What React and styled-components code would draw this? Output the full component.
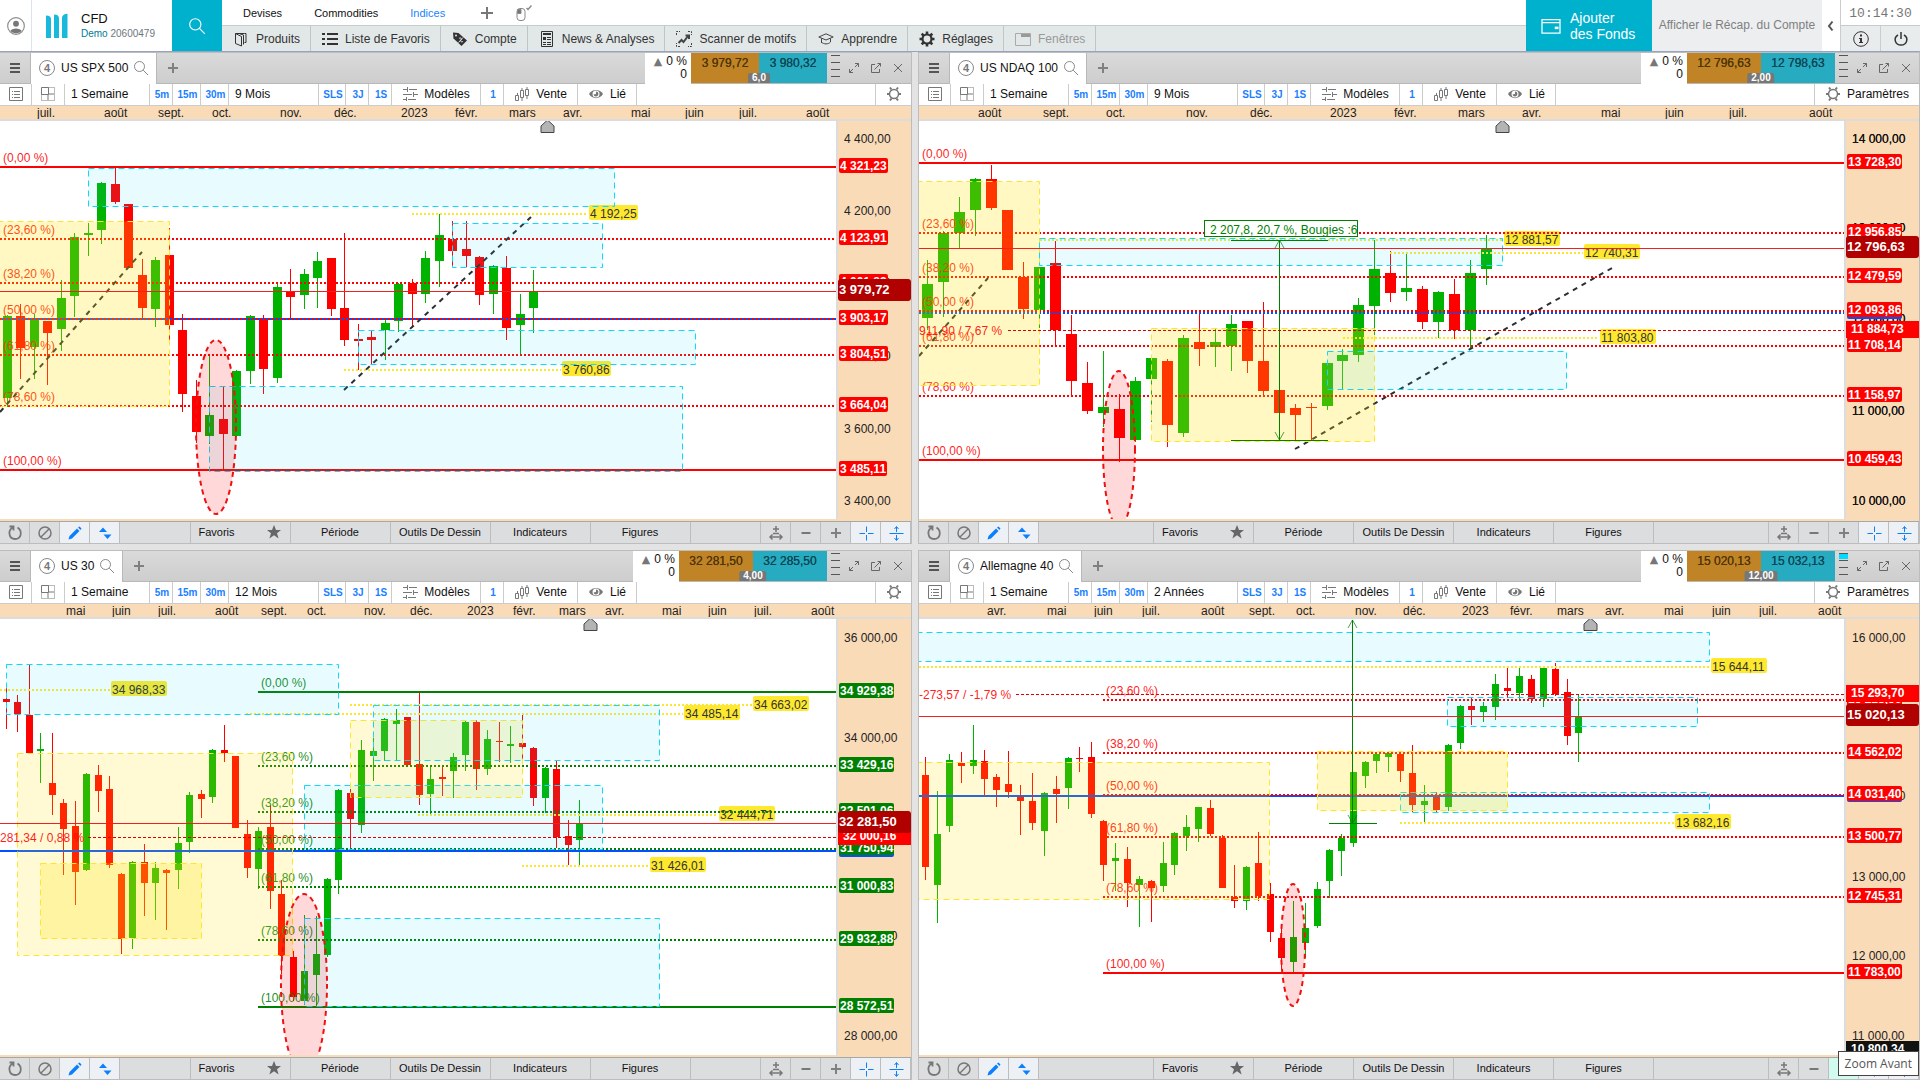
import React from 'react';
import styled, { createGlobalStyle } from 'styled-components';

// candle rows are [colour, high, bodyTop, bodyBottom, low] in plot units

const spx = {
    id: 'spx',
    name: 'US SPX 500',
    range: '9 Mois',
    sell: '3 979,72',
    buy: '3 980,32',
    spread: '6,0',
    size: [836, 398],
    step: 13.5,
    body: 9,
    snap: Math.floor,
    months: [[37, 'juil.'], [104, 'août'], [158, 'sept.'], [212, 'oct.'], [280, 'nov.'], [334, 'déc.'], [401, '2023'], [455, 'févr.'], [509, 'mars'], [563, 'avr.'], [631, 'mai'], [685, 'juin'], [739, 'juil.'], [806, 'août']],
    marker: 547,
    candles: [
        ['g', 194, 195, 277, 286], ['r', 183, 195, 227, 258], ['g', 193, 198, 226, 258], ['r', 200, 200, 212, 264],
        ['g', 159, 177, 208, 230], ['g', 112, 116, 175, 196], ['g', 102, 112, 114, 135], ['g', 61, 62, 109, 123],
        ['r', 47, 63, 81, 83], ['r', 83, 83, 147, 147], ['r', 138, 154, 187, 198], ['g', 136, 139, 188, 206],
        ['r', 107, 134, 204, 221], ['r', 193, 209, 273, 291], ['r', 259, 275, 311, 322], ['g', 235, 294, 315, 323],
        ['r', 266, 298, 313, 348], ['g', 249, 250, 315, 316], ['g', 194, 195, 250, 263], ['r', 194, 198, 248, 273],
        ['g', 163, 166, 257, 262], ['r', 148, 171, 176, 198], ['g', 148, 153, 174, 188], ['g', 131, 140, 157, 187],
        ['r', 137, 137, 188, 195], ['r', 112, 187, 219, 225], ['r', 203, 218, 220, 249], ['r', 210, 216, 219, 243],
        ['g', 198, 202, 209, 239], ['g', 162, 163, 200, 211], ['r', 158, 162, 173, 207], ['g', 130, 137, 173, 182],
        ['g', 93, 114, 140, 166], ['r', 100, 118, 130, 146], ['r', 100, 128, 135, 146], ['r', 135, 136, 174, 184],
        ['g', 144, 145, 173, 193], ['r', 135, 147, 207, 219], ['g', 173, 193, 204, 233], ['g', 149, 171, 187, 212]
    ],
    fib: {
        color: '#ff0000', x: 0,
        levels: [[46, '(0,00 %)', '4 321,23', true], [118, '(23,60 %)', '4 123,91'], [162, '(38,20 %)', '4 001,83'], [198, '(50,00 %)', '3 903,17'], [234, '(61,80 %)', '3 804,51'], [285, '(78,60 %)', '3 664,04'], [349, '(100,00 %)', '3 485,11', true]]
    },
    blue: { y: 198 },
    price: { y: 170, text: '3 979,72' },
    notes: [[93, 412, 586, 589, '4 192,25'], [249, 344, 561, 562, '3 760,86']],
    trends: [[0, 291, 142, 131], [344, 269, 531, 96]],
    zones: [['c', 88, 47, 614, 85], ['y', -3, 100, 169, 285], ['c', 452, 102, 602, 146], ['c', 358, 209, 695, 243], ['c', 209, 265, 682, 350]],
    ellipse: [216, 306, 20, 87],
    ticks: [[18, '4 400,00'], [90, '4 200,00'], [162, '4 000,00'], [235, '3 800,00'], [308, '3 600,00'], [380, '3 400,00']]
};

const ndaq = {
    id: 'ndaq',
    name: 'US NDAQ 100',
    range: '9 Mois',
    sell: '12 796,63',
    buy: '12 798,63',
    spread: '2,00',
    settings: true,
    heavyTicks: true,
    size: [925, 398],
    step: 15.98,
    body: 11,
    snap: Math.round,
    months: [[59, 'août'], [124, 'sept.'], [187, 'oct.'], [267, 'nov.'], [331, 'déc.'], [411, '2023'], [475, 'févr.'], [539, 'mars'], [603, 'avr.'], [682, 'mai'], [746, 'juin'], [810, 'juil.'], [890, 'août']],
    marker: 583,
    candles: [
        ['g', 139, 163, 197, 209], ['g', 110, 112, 161, 196], ['g', 76, 91, 112, 127], ['g', 57, 58, 89, 115],
        ['r', 44, 58, 87, 89], ['r', 89, 89, 149, 149], ['r', 141, 156, 188, 198], ['g', 146, 146, 189, 207],
        ['r', 120, 142, 209, 226], ['r', 194, 213, 260, 275], ['r', 241, 262, 290, 293], ['g', 230, 286, 292, 306],
        ['r', 273, 288, 317, 341], ['g', 256, 260, 319, 321], ['g', 237, 237, 258, 301], ['r', 238, 240, 304, 326],
        ['g', 214, 217, 312, 316], ['r', 192, 221, 228, 245], ['g', 208, 221, 226, 246], ['g', 194, 203, 225, 250],
        ['r', 200, 200, 240, 252], ['r', 181, 240, 270, 274], ['r', 269, 269, 292, 292], ['r', 283, 287, 294, 319],
        ['r', 282, 286, 287, 319], ['g', 242, 242, 285, 289], ['g', 228, 234, 240, 268], ['g', 177, 184, 234, 241],
        ['g', 119, 148, 185, 214], ['r', 130, 152, 172, 181], ['g', 133, 167, 171, 180], ['r', 165, 168, 201, 208],
        ['g', 170, 171, 201, 217], ['r', 158, 173, 209, 218], ['g', 139, 152, 209, 227], ['g', 114, 128, 148, 164]
    ],
    fib: {
        color: '#ff0000', x: 0,
        levels: [[42, '(0,00 %)', '13 728,30', true], [112, '(23,60 %)', '12 956,85'], [156, '(38,20 %)', '12 479,59'], [190, '(50,00 %)', '12 093,86'], [225, '(61,80 %)', '11 708,14'], [275, '(78,60 %)', '11 158,97'], [339, '(100,00 %)', '10 459,43', true]]
    },
    blue: { y: 192, dotted: true },
    price: { y: 127, text: '12 796,63' },
    order: { y: 209, x: 89, text: '911,90 / 7,67 %', tag: '11 884,73' },
    notes: [[119, 121, 583, 585, '12 881,57'], [132, 471, 664, 665, '12 740,31'], [217, 424, 678, 681, '11 803,80']],
    trends: [[0, 235, 69, 157], [376, 328, 693, 147]],
    zones: [['y', -3, 60, 120, 264], ['c', 120, 117, 583, 144], ['y', 232, 207, 455, 320], ['c', 408, 230, 647, 268]],
    ellipse: [200, 328, 16, 78],
    measure: { x: 360, top: 119, bottom: 319, from: 312, to: 409, label: '2 207,8, 20,7 %, Bougies :6' },
    ticks: [[18, '14 000,00'], [107, '13 000,00'], [198, '12 000,00'], [290, '11 000,00'], [380, '10 000,00']]
};

const us30 = {
    id: 'us30',
    name: 'US 30',
    range: '12 Mois',
    sell: '32 281,50',
    buy: '32 285,50',
    spread: '4,00',
    size: [836, 436],
    step: 11.463,
    body: 7,
    snap: Math.round,
    months: [[66, 'mai'], [112, 'juin'], [158, 'juil.'], [215, 'août'], [261, 'sept.'], [307, 'oct.'], [364, 'nov.'], [410, 'déc.'], [467, '2023'], [513, 'févr.'], [559, 'mars'], [605, 'avr.'], [662, 'mai'], [708, 'juin'], [754, 'juil.'], [811, 'août']],
    marker: 590,
    candles: [
        ['r', 69, 80, 83, 110], ['r', 76, 83, 95, 113], ['r', 46, 96, 134, 134], ['g', 114, 130, 132, 164],
        ['r', 114, 164, 176, 196], ['r', 180, 184, 210, 256], ['r', 182, 207, 253, 286], ['g', 154, 155, 251, 252],
        ['r', 146, 156, 172, 193], ['r', 157, 170, 246, 249], ['r', 254, 255, 320, 335], ['g', 242, 243, 319, 330],
        ['r', 225, 243, 264, 297], ['g', 243, 249, 264, 301], ['r', 250, 251, 254, 311], ['g', 208, 224, 251, 270],
        ['g', 173, 176, 223, 234], ['r', 171, 175, 180, 199], ['g', 130, 131, 178, 184], ['r', 106, 131, 134, 143],
        ['r', 137, 137, 209, 209], ['r', 201, 215, 249, 259], ['g', 208, 212, 250, 270], ['r', 186, 208, 272, 290],
        ['r', 261, 275, 337, 355], ['r', 332, 338, 378, 382], ['g', 296, 352, 382, 386], ['g', 297, 335, 356, 387],
        ['g', 259, 260, 336, 338], ['g', 170, 171, 261, 275], ['r', 170, 174, 200, 229], ['g', 121, 131, 206, 214],
        ['g', 119, 132, 137, 162], ['g', 99, 100, 132, 142], ['g', 90, 101, 105, 141], ['r', 98, 98, 146, 146],
        ['r', 74, 145, 176, 186], ['g', 147, 160, 175, 195], ['r', 148, 158, 160, 177], ['g', 134, 138, 152, 179],
        ['g', 102, 103, 136, 152], ['r', 101, 103, 150, 171], ['g', 111, 120, 150, 156], ['r', 103, 122, 123, 143],
        ['g', 107, 125, 127, 144], ['r', 96, 124, 128, 145], ['r', 128, 129, 179, 187], ['g', 148, 149, 179, 194],
        ['r', 142, 150, 218, 229], ['r', 201, 217, 226, 246], ['g', 181, 205, 221, 246]
    ],
    fib: {
        color: '#008000', x: 258,
        levels: [[73, '(0,00 %)', '34 929,38', true], [147, '(23,60 %)', '33 429,16'], [193, '(38,20 %)', '32 501,06'], [230, '(50,00 %)', '31 750,94'], [268, '(61,80 %)', '31 000,83'], [321, '(78,60 %)', '29 932,88'], [388, '(100,00 %)', '28 572,51', true]]
    },
    blue: { y: 232 },
    price: { y: 204, text: '32 281,50' },
    order: { y: 218, x: 88, text: '281,34 / 0,88 %', tag: '32 000,16' },
    notes: [[71, 0, 110, 111, '34 968,33'], [86, 350, 752, 753, '34 663,02'], [95, 246, 683, 684, '34 485,14'], [196, 418, 717, 719, '32 444,71'], [247, 522, 648, 650, '31 426,01']],
    trends: [],
    zones: [['c', 6, 45, 338, 95], ['p', 17, 134, 292, 336], ['y', 40, 244, 201, 319], ['c', 304, 166, 602, 230], ['p', 350, 101, 522, 178], ['c', 373, 86, 659, 141], ['c', 304, 299, 659, 387]],
    ellipse: [304, 365, 23, 90],
    ticks: [[19, '36 000,00'], [119, '34 000,00'], [218, '32 000,00'], [317, '30 000,00'], [417, '28 000,00']]
};

const dax = {
    id: 'dax',
    name: 'Allemagne 40',
    range: '2 Années',
    sell: '15 020,13',
    buy: '15 032,13',
    spread: '12,00',
    settings: true,
    depth: true,
    tooltip: 'Zoom Avant',
    size: [925, 436],
    step: 11.88,
    body: 7,
    snap: Math.round,
    months: [[68, 'avr.'], [128, 'mai'], [175, 'juin'], [223, 'juil.'], [282, 'août'], [330, 'sept.'], [377, 'oct.'], [436, 'nov.'], [484, 'déc.'], [543, '2023'], [591, 'févr.'], [638, 'mars'], [686, 'avr.'], [745, 'mai'], [793, 'juin'], [840, 'juil.'], [899, 'août']],
    marker: 671,
    candles: [
        ['r', 138, 156, 248, 261], ['g', 172, 215, 266, 304], ['g', 135, 141, 207, 213], ['r', 133, 144, 147, 164],
        ['g', 106, 141, 147, 155], ['r', 131, 142, 160, 176], ['r', 155, 158, 171, 188], ['r', 132, 165, 173, 179],
        ['r', 166, 176, 182, 216], ['r', 154, 182, 204, 211], ['g', 173, 174, 212, 237], ['r', 157, 170, 175, 204],
        ['g', 138, 139, 169, 190], ['r', 128, 139, 140, 153], ['r', 123, 138, 195, 199], ['r', 201, 202, 246, 262],
        ['g', 224, 239, 242, 272], ['r', 228, 240, 264, 288], ['g', 257, 260, 266, 308], ['r', 261, 262, 269, 303],
        ['g', 223, 244, 267, 273], ['g', 213, 214, 246, 256], ['g', 196, 208, 217, 232], ['g', 188, 188, 210, 223],
        ['r', 181, 189, 215, 217], ['r', 216, 219, 269, 269], ['r', 246, 278, 282, 289], ['g', 247, 248, 282, 291],
        ['r', 213, 244, 277, 282], ['r', 264, 275, 313, 323], ['r', 305, 319, 339, 350], ['g', 282, 318, 343, 353],
        ['g', 284, 309, 324, 339], ['g', 263, 270, 307, 309], ['g', 230, 231, 262, 279], ['g', 215, 219, 232, 257],
        ['g', 153, 153, 224, 228], ['g', 142, 143, 157, 169], ['g', 134, 135, 142, 154], ['g', 132, 134, 138, 153],
        ['r', 134, 135, 152, 163], ['r', 126, 154, 186, 193], ['g', 166, 182, 186, 203], ['r', 173, 176, 191, 193],
        ['g', 125, 126, 188, 192], ['g', 86, 87, 124, 130], ['r', 79, 87, 91, 106], ['g', 83, 87, 93, 103],
        ['g', 55, 65, 88, 101], ['r', 49, 69, 72, 79], ['g', 49, 57, 74, 80], ['r', 56, 60, 80, 84],
        ['g', 48, 49, 80, 88], ['r', 44, 50, 75, 77], ['r', 60, 73, 117, 126], ['g', 76, 98, 114, 143]
    ],
    fib: {
        color: '#ff0000', x: 184,
        levels: [[81, '(23,60 %)', '15 218,56'], [134, '(38,20 %)', '14 562,02'], [176, '(50,00 %)', '14 031,40'], [218, '(61,80 %)', '13 500,77'], [278, '(78,60 %)', '12 745,31'], [354, '(100,00 %)', '11 783,00', true]]
    },
    blue: { y: 177 },
    price: { y: 97, text: '15 020,13' },
    order: { y: 75, x: 97, text: '-273,57 / -1,79 %', tag: '15 293,70' },
    notes: [[48, 0, 790, 792, '15 644,11'], [204, 481, 755, 756, '13 682,16']],
    trends: [],
    zones: [['c', -3, 13, 790, 42], ['p', -3, 143, 350, 280], ['c', 481, 173, 790, 193], ['y', 398, 132, 588, 191], ['c', 528, 78, 778, 107]],
    ellipse: [374, 326, 12, 61],
    measure: { x: 433, top: 1, bottom: 204, from: 410, to: 458 },
    ticks: [[19, '16 000,00'], [98, '15 000,00'], [177, '14 000,00'], [258, '13 000,00'], [337, '12 000,00'], [417, '11 000,00']],
    low: { y: 430, text: '10 800,34' }
};

const zoneFill = {
    c: ['rgba(0, 215, 255, 0.09)', '#12d9fa'],
    y: ['rgba(255, 225, 0, 0.24)', '#ffe62e'],
    p: ['rgba(255, 225, 0, 0.17)', '#ffe62e']
};

/* ---------- icons ---------- */

const paths = {
    user: <g><circle cx="8" cy="8" r="7.4" fill="none" stroke="#888" /><circle cx="8" cy="6" r="2.6" fill="#777" /><path d="M3 12.5c1-3 9-3 10 0-2.500 2.600-7.500 2.600-10 0z" fill="#777" /></g>,
    search: <g fill="none" stroke="currentColor"><circle cx="6.500" cy="6.500" r="5" /><path d="M10.200 10.200 15 15" /></g>,
    products: <g fill="none" stroke="#333"><path d="M2.500 2.500h9M2.500 2.500v10l6 2.500V5.500z" /><path d="M6 2.500 10.500 4v9.500M11.500 2.500h1.500v9h-1.500" /></g>,
    list: <path d="M0 2h3v2H0zM5 2h11v2H5zM0 7h3v2H0zM5 7h11v2H5zM0 12h3v2H0zM5 12h11v2H5z" fill="#333" />,
    tag: <g><path d="M1 1.500 6.500 2 15 9.500 9.500 15 1.500 7.500z" fill="#333" /><circle cx="4" cy="4.500" r="1" fill="#e2e8e8" /><path d="M7 7.500c2-1.500 3 .5 2 1.500s0 2.500 2 1.500M11 6.500l-4.500 5" stroke="#e2e8e8" fill="none" /></g>,
    news: <g><path d="M2.500.5h11v15h-11z" fill="none" stroke="#333" /><path d="M4 2h8v2H4zM4 6h3v3H4zM8 6h4v1H8zM8 8h4v1H8zM4 11h3v1H4zM8 11h4v1H8zM4 13h3v1H4zM8 13h4v1H8z" fill="#333" /></g>,
    scan: <g fill="none" stroke="#444"><path d="M.5 4V.5H4M12 .5h3.500V4M15.500 12v3.500H12M4 15.500H.5V12" strokeDasharray="2 1" /><path d="m2.500 12 3-3 2 2L12 5" strokeWidth="2" /><path d="M9.500 4.500H13V8" strokeWidth="2" /></g>,
    learn: <g fill="none" stroke="#444"><path d="M.8 6 8 2.800 15.200 6 8 9z" /><path d="M3.500 7.500v3.500c2 2.500 7 2.500 9 0V7.500M3.500 9.500v2.500" /></g>,
    cog: <g fill="none" stroke="#333"><circle cx="8" cy="8" r="4.500" strokeWidth="2.200" /><path d="M8 .5V3M8 13v2.500M.5 8H3M13 8h2.500M2.700 2.700l1.800 1.800M11.500 11.500l1.800 1.800M13.300 2.700l-1.800 1.800M4.500 11.500l-1.800 1.800" strokeWidth="2.600" /></g>,
    windows: <g><path d="M.5 2.500h15v12H.5z" fill="none" stroke="#aaa" /><path d="M6 3h9v3H6z" fill="#999" /></g>,
    wallet: <g><path d="M.8 2.800h14.400v10.800H.8zM.8 5.200h14.400" fill="none" stroke="#fff" /><path d="M11 8.500h3v2h-3z" fill="#fff" /></g>,
    info: <g><circle cx="8" cy="8" r="7.300" fill="none" stroke="#333" /><path d="M7 3.500h2v2H7zM6 7h3v4h1v1H6v-1h1V8H6z" fill="#333" /></g>,
    power: <path d="M5 4C0 7 2 14 8 14s8-7 3-10M8 1v7" fill="none" stroke="#333" strokeWidth="1.500" />,
    chevron: <path d="M9.500 3.500 6 8l3.500 4.500" fill="none" stroke="#555" strokeWidth="2" />,
    mouse: <g fill="none" stroke="#888"><rect x="1" y="3.500" width="8" height="12" rx="3" /><path d="M1.500 4.500h3.500v4h-3.500z" fill="#777" /><path d="M10.500 3 12 4.500l3.500-4" strokeWidth="1.500" /></g>,
    menu: <path d="M3 3h10v2H3zM3 7h10v2H3zM3 11h10v2H3z" fill="#555" />,
    plus: <path d="M3 8h10M8 3v10" stroke="#808080" strokeWidth="2" fill="none" />,
    bigPlus: <path d="M2 8h12M8 2v12" stroke="#777" strokeWidth="2" fill="none" />,
    expand: <g fill="none" stroke="#666"><path d="m3.500 12.500 3.500-3.500M9 7l3.500-3.500M9 3.500h3.500V7M3.500 9v3.500H7" /></g>,
    popout: <path d="M7 4.500H3.500v8h8V9M6.500 9.500l6-6M9.500 3.500h3v3" fill="none" stroke="#666" />,
    close: <path d="m4 4 8 8M12 4l-8 8" fill="none" stroke="#666" />,
    sheet: <g fill="none" stroke="#777"><path d="M1.500 1.500h13v13h-13z" /><path d="M4 5.500h1M6 5.500h6M4 8.500h1M6 8.500h6M4 11.500h1M6 11.500h6" /></g>,
    layout: <g fill="none" stroke="#777"><path d="M1.500 1.500h7v7h-7z" /><path d="M8.500 1.500h6v6h-6M1.500 8.500v6h6v-6M8.500 8.500h6v6h-6z" strokeDasharray="1 1" /></g>,
    sliders: <path d="M1 4.500h4M7 4.500h8M1 9.500h9M12 9.500h4M1 14.500h3M6 14.500h8M5.500 2v5M11.500 7v5M4.500 12v4" fill="none" stroke="#777" transform="translate(0 -1)" />,
    candles: <g fill="none" stroke="#777"><path d="M1.500 9.500h3v5h-3zM6.500 4.500h3v7h-3zM11.500 3.500h3v6h-3zM3.500 7v2M8 2v2M8 12v3M13 1v2M13 10v3" /></g>,
    eye: <g><path d="M1 8c3-5.500 11-5.500 14 0-3 5.500-11 5.500-14 0z" fill="#777" /><circle cx="8" cy="8" r="3.500" fill="#fff" /><path d="M8 5.500a2.500 2.500 0 1 1-2.500 3L8 8z" fill="#777" /></g>,
    gear: <g fill="none" stroke="#777"><circle cx="8" cy="8" r="4.500" strokeWidth="1.500" /><path d="M1 8h2M13 8h2M4 1.500l1.500 2M12 1.500l-1.500 2M4 14.500l1.500-2M12 14.500l-1.500-2" strokeWidth="2" /></g>,
    reload: <path d="M2.500 1.500h4v4M6 2.500C.5 5 1.500 14 8 14s7.800-8 2.500-11.500" fill="none" stroke="#777" strokeWidth="1.800" />,
    ban: <g fill="none" stroke="#777" strokeWidth="1.500"><circle cx="8" cy="8" r="6" /><path d="m4 12 8-8" /></g>,
    pencil: <path d="M1.500 14.500 2.500 11l7.500-7.500 2.500 2.500L5 13.500zM11 2.500l1.500-1L14.500 3.500l-1 1.500z" fill="#0a80ff" />,
    updown: <path d="M6 2.500 10 7H2zM10.500 14 6.500 9.500h8z" fill="#0a80ff" />,
    star: <path d="m8 1 2 5h5l-4 3.200 1.600 5.300L8 11.300l-4.600 3.200L5 9.200 1 6h5z" fill="#666" />,
    fit: <path d="M8 1v6M5 4h6M5 8.500h6M2 12h12M4.500 9.500 2 12l2.500 2.500M11.500 9.500 14 12l-2.500 2.500" fill="none" stroke="#777" strokeWidth="1.500" />,
    minus: <path d="M3.500 8h9" stroke="#777" strokeWidth="2" fill="none" />,
    cross: <path d="M1.500 8.500H7M10 8.500h5.500M8.500 1.500V7M8.500 10v5.500" stroke="#0a80ff" fill="none" />,
    split: <path d="M1.500 8.500h14M8.500 2v5M8.500 10v5M6.500 4l2-2.500 2 2.500M6.500 13l2 2.500 2-2.500" stroke="#0a80ff" fill="none" />
};

const Icon = ({ name, size = 16 }) => (
    <IconSvg viewBox="0 0 16 16" $size={size} aria-hidden="true">{paths[name]}</IconSvg>
);

/* ---------- chart ---------- */

const Plot = ({ data }) => {
    const [w, h] = data.size;
    const { fib, blue, price, order, measure, ellipse } = data;
    const half = (data.body - 1) / 2;

    return (
        <PlotSvg viewBox={`0 0 ${w} ${h}`} preserveAspectRatio="none" role="img" aria-label={data.name}>
            {/* candles */}
            <g shapeRendering="crispEdges">
                {data.candles.map(([c, high, top, bottom, low], i) => {
                    const x = data.snap(3 + data.step * i);
                    return (
                        <g key={i} fill={c === 'g' ? '#00b300' : '#ff0000'}>
                            <rect x={x + half} y={high} width="1" height={low - high} />
                            <rect x={x} y={top} width={data.body} height={bottom - top} />
                        </g>
                    );
                })}
            </g>

            {/* price notes */}
            {data.notes.map(([y, from, to, x, text]) => (
                <g key={text}>
                    <path d={`M${from} ${y}H${to}`} stroke="#ffe62e" strokeWidth="2" strokeDasharray="2 2" shapeRendering="crispEdges" />
                    <rect x={x} y={y - 9} width={text.length > 8 ? 56 : 49} height="15" rx="2" fill="#ffe92e" />
                    <text x={x + 1} y={y + 4} fill="#333">{text}</text>
                </g>
            ))}

            {/* fibonacci levels */}
            <g shapeRendering="crispEdges">
                <path d={`M0 ${blue.y}H${w}`} stroke="#0050ff" strokeWidth="2" strokeDasharray={blue.dotted ? '2 2' : 'none'} />
                {fib.levels.map(([y, label, , solid]) => (
                    <path key={label} d={`M${fib.x} ${y}H${w}`} stroke={fib.color} strokeWidth="2" strokeDasharray={solid ? 'none' : '2 2'} />
                ))}
            </g>
            {fib.levels.map(([y, label]) => (
                <text key={label} x={fib.x + 3} y={y - 5} fill={fib.color} fillOpacity="0.9">{label}</text>
            ))}

            {data.trends.map(([x1, y1, x2, y2]) => (
                <path key={x1} d={`M${x1} ${y1}L${x2} ${y2}`} stroke="#2b2f33" strokeWidth="2" strokeDasharray="5 5" />
            ))}

            {data.zones.map(([kind, x1, y1, x2, y2], i) => (
                <rect key={i} x={x1 + 0.5} y={y1 + 0.5} width={x2 - x1} height={y2 - y1}
                    fill={zoneFill[kind][0]} stroke={zoneFill[kind][1]} strokeDasharray="6 4" />
            ))}

            <ellipse cx={ellipse[0]} cy={ellipse[1]} rx={ellipse[2]} ry={ellipse[3]} fill="rgba(255, 0, 0, 0.15)" stroke="#f01010" strokeWidth="2" strokeDasharray="5 4" />

            {measure && (
                <g fill="none" stroke="#008000">
                    <path d={`M${measure.x + 0.5} ${measure.top}V${measure.bottom}`} />
                    <path d={`M${measure.x - 4} ${measure.top + 8}l4.500-8 4.500 8M${measure.x - 4} ${measure.bottom - 8}l4.500 8 4.500-8`} strokeOpacity="0.7" />
                    <path d={`M${measure.from} ${measure.bottom + 0.5}H${measure.to}`} />
                    {measure.label && (
                        <>
                            <path d={`M${measure.from} ${measure.top + 0.5}H${measure.to}`} />
                            <rect x="285.5" y="99.5" width="153" height="16" fill="#fff" />
                            <text x="291" y="113" fill="#008000" stroke="none">{measure.label}</text>
                        </>
                    )}
                </g>
            )}

            {order && (
                <g>
                    <path d={`M${order.x} ${order.y + 0.5}H${w}`} stroke="#e00000" strokeDasharray="3 2" shapeRendering="crispEdges" />
                    <text x="0" y={order.y + 5} fill="#f00" fillOpacity="0.9">{order.text}</text>
                </g>
            )}

            <path d={`M0 ${price.y + 0.5}H${w}`} stroke="#f02020" />
            <path d={`M${data.marker - 6} 11.500V5l6.500-6 6.500 6v6.500z`} fill="#b4b4b4" stroke="#444" />
        </PlotSvg>
    );
};

const Axis = ({ data }) => {
    const at = y => ({ top: `${(y / data.size[1]) * 100}%` });
    const { fib, price, order, blue, low } = data;

    return (
        <AxisBox>
            {data.ticks.map(([y, text]) => <Tick key={text} $heavy={data.heavyTicks} style={at(y)}>{text}</Tick>)}
            <BlueTag $wide={data.sell.length > 8} style={at(blue.y - 1)} />
            {fib.levels.map(([y, , text]) => <Tag key={text} $bg={fib.color} style={at(y - 1)}>{text}</Tag>)}
            {order && <OrderTag $bg="#ff0000" style={at(order.y - 1)}>{order.tag}</OrderTag>}
            {low && <OrderTag $bg="#111111" style={at(low.y)}>{low.text}</OrderTag>}
            <PriceTag style={at(price.y - 1)}>{price.text}</PriceTag>
        </AxisBox>
    );
};

const ChartPanel = ({ data, side }) => (
    <Panel $side={side}>
        <TabBar>
            <MenuButton aria-label="Menu"><Icon name="menu" /></MenuButton>
            <Tab>
                <Circle>4</Circle>
                {data.name}
                <Icon name="search" />
            </Tab>
            <AddTab aria-label="Ajouter un onglet"><Icon name="plus" /></AddTab>
            <Stats>
                <span><Up>▲</Up>0 %</span>
                <span>0</span>
            </Stats>
            <Prices>
                <PriceButton $bg="#c08427" $fg="#4f3408" $wide={data.sell.length > 8}>{data.sell}</PriceButton>
                <PriceButton $bg="#27abc0" $fg="#0b4654" $wide={data.sell.length > 8}>{data.buy}</PriceButton>
                <Spread>{data.spread}</Spread>
            </Prices>
            <WindowTools>
                <Ladder $on={data.depth}><i /><i /><i /><i /></Ladder>
                <ToolButton aria-label="Agrandir"><Icon name="expand" /></ToolButton>
                <ToolButton aria-label="Détacher"><Icon name="popout" /></ToolButton>
                <ToolButton aria-label="Fermer"><Icon name="close" /></ToolButton>
            </WindowTools>
        </TabBar>

        <Toolbar>
            <Cell $w={32} aria-label="Liste"><Icon name="sheet" /></Cell>
            <Cell $w={33} aria-label="Disposition"><Icon name="layout" /></Cell>
            <Cell $w={85} $left>1 Semaine</Cell>
            <Cell $w={23} $quick>5m</Cell>
            <Cell $w={28} $quick>15m</Cell>
            <Cell $w={28} $quick>30m</Cell>
            <Cell $w={90} $left>{data.range}</Cell>
            <Cell $w={27} $quick>SLS</Cell>
            <Cell $w={23} $quick>3J</Cell>
            <Cell $w={23} $quick>1S</Cell>
            <Cell $w={89}><Icon name="sliders" />Modèles</Cell>
            <Cell $w={23} $quick>1</Cell>
            <Cell $w={74}><Icon name="candles" />Vente</Cell>
            <Cell $w={59}><Icon name="eye" />Lié</Cell>
            <SettingsCell $w={data.settings ? 105 : 36} aria-label="Paramètres"><Icon name="gear" />{data.settings && 'Paramètres'}</SettingsCell>
        </Toolbar>

        <Timeline>
            {data.months.map(([x, text]) => (
                <Month key={x} style={{ left: `${(x / (data.size[0] + 75)) * 100}%` }}>{text}</Month>
            ))}
        </Timeline>

        <ChartBody>
            <PlotArea><Plot data={data} /></PlotArea>
            <Axis data={data} />
        </ChartBody>

        <Footer>
            <FootIcon aria-label="Réinitialiser"><Icon name="reload" /></FootIcon>
            <FootIcon aria-label="Masquer"><Icon name="ban" /></FootIcon>
            <FootIcon $on aria-label="Dessiner"><Icon name="pencil" /></FootIcon>
            <FootIcon $on aria-label="Ordres"><Icon name="updown" /></FootIcon>
            <FootSpace />
            <FootButton $split>Favoris<Icon name="star" /></FootButton>
            <FootButton>Période</FootButton>
            <FootButton>Outils De Dessin</FootButton>
            <FootButton>Indicateurs</FootButton>
            <FootButton>Figures</FootButton>
            <FootSpace />
            <FootIcon aria-label="Ajuster"><Icon name="fit" /></FootIcon>
            <FootIcon aria-label="Zoom arrière"><Icon name="minus" /></FootIcon>
            <FootIcon $hover={!!data.tooltip} aria-label="Zoom avant"><Icon name="plus" /></FootIcon>
            <FootIcon $on aria-label="Réticule"><Icon name="cross" /></FootIcon>
            <FootIcon $on aria-label="Échelle"><Icon name="split" /></FootIcon>
            {data.tooltip && <Tooltip role="tooltip">{data.tooltip}</Tooltip>}
        </Footer>
    </Panel>
);

const menu = [
    ['products', 'Produits'],
    ['list', 'Liste de Favoris'],
    ['tag', 'Compte'],
    ['news', 'News & Analyses'],
    ['scan', 'Scanner de motifs'],
    ['learn', 'Apprendre'],
    ['cog', 'Réglages'],
    ['windows', 'Fenêtres']
];

const App = () => {
    return (
        <Page>
            <GlobalStyle />
            <Header>
                <Avatar aria-label="Profil"><Icon name="user" size={18} /></Avatar>
                <Brand>
                    <Logo viewBox="0 0 22 26" aria-hidden="true">
                        <path d="M0 2.500C3.500 2.500 5 4 5 6v19H0zM8 1.500c3.500 0 5 1.500 5 4V25H8zM21.500.8C18 .8 16 2.500 16 5v20h5.500z" fill="#18b9da" />
                    </Logo>
                    <div>
                        <BrandName>CFD</BrandName>
                        <Account><b>Demo</b> 20600479</Account>
                    </div>
                </Brand>
                <SearchButton aria-label="Rechercher"><Icon name="search" size={18} /></SearchButton>
                <Nav>
                    <Workspaces>
                        <WorkLink href="#devises">Devises</WorkLink>
                        <WorkLink href="#commodities">Commodities</WorkLink>
                        <WorkLink href="#indices" $active>Indices</WorkLink>
                        <WorkTools>
                            <ToolButton aria-label="Ajouter"><Icon name="bigPlus" /></ToolButton>
                            <ToolButton aria-label="Souris"><Icon name="mouse" /></ToolButton>
                        </WorkTools>
                    </Workspaces>
                    <Menu>
                        {menu.map(([icon, text]) => (
                            <MenuItem key={text} disabled={text === 'Fenêtres'}><Icon name={icon} />{text}</MenuItem>
                        ))}
                    </Menu>
                </Nav>
                <Funds><Icon name="wallet" size={20} /><span>Ajouter<br />des Fonds</span></Funds>
                <Recap>Afficher le Récap. du Compte</Recap>
                <Collapse aria-label="Replier"><Icon name="chevron" /></Collapse>
                <Status>
                    <Clock>10:14:30</Clock>
                    <StatusRow>
                        <StatusButton aria-label="Infos"><Icon name="info" /></StatusButton>
                        <StatusButton aria-label="Quitter"><Icon name="power" /></StatusButton>
                    </StatusRow>
                </Status>
            </Header>
            <Grid>
                <ChartPanel data={spx} side="left" />
                <ChartPanel data={ndaq} side="right" />
                <ChartPanel data={us30} side="left" />
                <ChartPanel data={dax} side="right" />
            </Grid>
        </Page>
    );
};

export default App;

const GlobalStyle = createGlobalStyle`
    * {
        box-sizing: border-box;
    }
    body {
        margin: 0;
        font-family: 'Liberation Sans', Arial, sans-serif;
        font-size: 12px;
        color: #111;
        background: #fff;
    }
    button {
        font: inherit;
        color: inherit;
        background: none;
        border: 0;
        padding: 0;
        margin: 0;
        white-space: nowrap;
    }
`;

const Page = styled.div`
    display: flex;
    flex-direction: column;
    height: 100vh;
    min-height: 600px;
    overflow: hidden;
`;

const IconSvg = styled.svg`
    width: ${p => p.$size}px;
    height: ${p => p.$size}px;
    flex: none;
    display: block;
`;

const Header = styled.header`
    display: flex;
    flex: none;
    height: 52px;
    border-bottom: 1px solid #97a3c0;
`;

const Avatar = styled.button`
    width: 32px;
    display: flex;
    align-items: center;
    justify-content: center;
    border-right: 1px solid #dde3ea;
`;

const Brand = styled.div`
    width: 140px;
    display: flex;
    align-items: center;
    gap: 13px;
    padding-left: 14px;
`;

const Logo = styled.svg`
    width: 22px;
    height: 26px;
`;

const BrandName = styled.div`
    font-size: 13px;
    line-height: 16px;
`;

const Account = styled.div`
    font-size: 10px;
    line-height: 14px;
    color: #6c7780;
    b {
        font-weight: normal;
        color: #007a96;
    }
`;

const SearchButton = styled.button`
    width: 50px;
    display: flex;
    align-items: center;
    justify-content: center;
    background: #00b1ce;
    color: #fff;
`;

const Nav = styled.nav`
    flex: 1;
    min-width: 0;
    display: flex;
    flex-direction: column;
`;

const Workspaces = styled.div`
    display: flex;
    align-items: center;
    gap: 32px;
    height: 25px;
    padding-left: 21px;
`;

const WorkLink = styled.a`
    font-size: 11px;
    text-decoration: none;
    color: ${p => (p.$active ? '#1a7fff' : '#111')};
`;

const WorkTools = styled.div`
    display: flex;
    gap: 21px;
    padding-left: 2px;
`;

const ToolButton = styled.button`
    display: flex;
`;

const Menu = styled.div`
    flex: 1;
    display: flex;
    background: #e2e8e8;
    border-top: 1px solid #c6cccc;
`;

const MenuItem = styled.button`
    display: flex;
    align-items: center;
    gap: 7px;
    padding: 0 10px 0 11px;
    color: #333;
    border-right: 1px solid #c0c6c6;

    &:disabled {
        color: #999;
    }
`;

const Funds = styled.button`
    width: 126px;
    display: flex;
    align-items: center;
    gap: 9px;
    padding-left: 15px;
    font-size: 14px;
    line-height: 16px;
    text-align: left;
    color: #fff;
    background: #00b1ce;
`;

const Recap = styled.button`
    width: 170px;
    padding-bottom: 2px;
    color: #808080;
    background: #eceef0;
`;

const Collapse = styled.button`
    width: 19px;
    display: flex;
    align-items: center;
    justify-content: center;
    border-right: 1px solid #ccc;
`;

const Status = styled.div`
    width: 79px;
    display: flex;
    flex-direction: column;
`;

const Clock = styled.time`
    height: 25px;
    line-height: 27px;
    text-align: center;
    font-family: 'Liberation Mono', monospace;
    font-size: 13px;
    color: #777;
`;

const StatusRow = styled.div`
    flex: 1;
    display: flex;
    border-top: 1px solid #c6cccc;
    background: #e9ecec;
`;

const StatusButton = styled.button`
    flex: 1;
    display: flex;
    align-items: center;
    justify-content: center;

    & + & {
        border-left: 1px solid #ccc;
    }
`;

const Grid = styled.main`
    flex: 1;
    min-height: 0;
    display: grid;
    grid-template-columns: minmax(0, 912fr) minmax(0, 1002fr);
    grid-template-rows: minmax(0, 491fr) minmax(0, 529fr);
    gap: 7px 6px;
    padding-top: 1px;
    background: #e3e3e3;
`;

const Panel = styled.section`
    display: flex;
    flex-direction: column;
    background: #fff;
    border-right: 1px solid #bdbdbd;
    border-left: ${p => (p.$side === 'right' ? '1px solid #bdbdbd' : '0')};
    box-shadow: 0 -1px 0 #bdbdbd;
`;

const TabBar = styled.div`
    display: flex;
    flex: none;
    height: 31px;
    background: linear-gradient(#dadada, #cdcdcd);
`;

const MenuButton = styled.button`
    width: 31px;
    display: flex;
    align-items: center;
    justify-content: center;
    border-right: 1px solid #b8b8b8;
    border-bottom: 1px solid #b8b8b8;
`;

const Tab = styled.button`
    display: flex;
    align-items: center;
    gap: 5px;
    padding: 0 7px 2px 8px;
    background: #fff;
    svg {
        color: #888;
    }
`;

const Circle = styled.span`
    width: 16px;
    height: 16px;
    margin-right: 1px;
    border: 1px solid #888;
    border-radius: 50%;
    font-size: 11px;
    font-weight: bold;
    line-height: 14px;
    text-align: center;
    color: #777;
`;

const AddTab = styled.button`
    flex: 1;
    display: flex;
    align-items: center;
    padding-left: 8px;
    border-left: 1px solid #b8b8b8;
    border-bottom: 1px solid #b8b8b8;
`;

const Stats = styled.div`
    width: 46px;
    display: flex;
    flex-direction: column;
    align-items: flex-end;
    padding: 2px 4px 0 0;
    line-height: 13px;
    background: #fff;
    white-space: nowrap;
`;

const Up = styled.span`
    margin-right: 4px;
    font-family: 'DejaVu Sans', sans-serif;
    font-size: 11px;
    line-height: 10px;
    color: #777;
`;

const Prices = styled.div`
    position: relative;
    display: flex;
    border-bottom: 1px solid #b8b8b8;
`;

const PriceButton = styled.button`
    width: ${p => (p.$wide ? 74 : 68)}px;
    padding-bottom: 10px;
    color: ${p => p.$fg};
    background: ${p => p.$bg};
    text-shadow: 0 0 0 ${p => p.$fg};
`;

const Spread = styled.span`
    position: absolute;
    left: 50%;
    bottom: 0;
    padding: 0 4px;
    transform: translateX(-50%);
    border-radius: 2px 2px 0 0;
    font-size: 10px;
    font-weight: bold;
    line-height: 10px;
    color: #fff;
    background: #777;
`;

const WindowTools = styled.div`
    width: 84px;
    display: flex;
    align-items: center;
    gap: 6px;
    padding-left: 4px;
    border-bottom: 1px solid #b8b8b8;
`;

const Ladder = styled.div`
    width: 9px;
    height: 28px;
    display: flex;
    flex-direction: column;
    gap: 6px;
    padding-top: 1px;
    i {
        height: 1px;
        background: #555;
    }
    i:first-child {
        height: ${p => (p.$on ? 6 : 1)}px;
        margin-bottom: ${p => (p.$on ? -5 : 0)}px;
        border-top: 1px solid #555;
        background: #00dcff;
    }
`;

const Toolbar = styled.div`
    display: flex;
    flex: none;
    height: 22px;
    border-bottom: 1px solid #ccc;
    overflow: hidden;
`;

const Cell = styled.button`
    width: ${p => p.$w}px;
    flex: none;
    display: flex;
    align-items: center;
    justify-content: ${p => (p.$left ? 'flex-start' : 'center')};
    gap: 6px;
    padding-left: ${p => (p.$left ? 6 : p.$quick ? 2 : 0)}px;
    padding-bottom: ${p => (p.$quick ? 0 : 2)}px;
    border-right: 1px solid #ccc;
    color: ${p => (p.$quick ? '#1a7fff' : '#111')};
    font-size: ${p => (p.$quick ? 10 : 12)}px;
    font-weight: ${p => (p.$quick ? 'bold' : 'normal')};
`;

const SettingsCell = styled(Cell)`
    margin-left: auto;
    border-right: 0;
    border-left: 1px solid #ccc;
`;

const Timeline = styled.div`
    position: relative;
    flex: none;
    height: 15px;
    overflow: hidden;
    background: #fadbb8;
    border-bottom: 2px solid #dcdcdc;
`;

const Month = styled.span`
    position: absolute;
    top: 0;
    line-height: 15px;
    color: #222;
`;

const ChartBody = styled.div`
    flex: 1;
    min-height: 0;
    display: flex;
    border-bottom: 2px solid #fadbb8;
`;

const PlotArea = styled.div`
    flex: 1;
    min-width: 0;
    min-height: 0;
`;

const PlotSvg = styled.svg`
    display: block;
    width: 100%;
    height: 100%;
    overflow: hidden;
    text {
        font-size: 12px;
    }
`;

const AxisBox = styled.div`
    position: relative;
    width: 75px;
    overflow: hidden;
    background: #fadbb8;
    border-left: 2px solid #dcdcdc;
`;

const Tick = styled.span`
    position: absolute;
    left: 6px;
    margin-top: -7px;
    line-height: 15px;
    color: ${p => (p.$heavy ? '#111' : '#222')};
    text-shadow: ${p => (p.$heavy ? '0 0 0 #111' : 'none')};
`;

const Tag = styled.span`
    position: absolute;
    left: 1px;
    height: 15px;
    margin-top: -8px;
    padding: 0 1px;
    border-radius: 2px;
    font-weight: bold;
    line-height: 17px;
    color: #fff;
    background: ${p => p.$bg};
`;

const BlueTag = styled(Tag)`
    width: ${p => (p.$wide ? 55 : 48)}px;
    background: #0050ff;
`;

const OrderTag = styled(Tag)`
    left: 0;
    right: 0;
    height: 17px;
    padding-left: 5px;
    border-radius: 0;
`;

const PriceTag = styled.span`
    position: absolute;
    left: 0;
    right: 0;
    margin-top: -11px;
    padding-left: 1px;
    border-radius: 3px;
    font-size: 13px;
    font-weight: bold;
    line-height: 22px;
    color: #fff;
    background: #b00000;
`;

const Footer = styled.div`
    position: relative;
    display: flex;
    flex: none;
    height: 23px;
    border-top: 1px solid #a5a8a8;
    border-bottom: 1px solid #bdbdbd;
    background: #dcdddf;
`;

const FootIcon = styled.button`
    width: 30px;
    display: flex;
    align-items: center;
    justify-content: center;
    border-right: 1px solid #bdbdbd;
    background: ${p => (p.$hover ? '#d2fbf0' : p.$on ? '#edf0f4' : 'transparent')};
`;

const FootSpace = styled.div`
    flex: 1;
    border-right: 1px solid #bdbdbd;
`;

const FootButton = styled.button`
    width: 100px;
    display: flex;
    align-items: center;
    justify-content: ${p => (p.$split ? 'space-between' : 'center')};
    padding: 0 8px 2px 8px;
    border-right: 1px solid #bdbdbd;
    font-size: 11px;
`;

const Tooltip = styled.div`
    position: absolute;
    right: 0;
    bottom: 3px;
    padding: 0 6px;
    border: 1px solid #444;
    font-family: 'Open Sans', sans-serif;
    line-height: 23px;
    color: #555;
    background: #fff;
`;
